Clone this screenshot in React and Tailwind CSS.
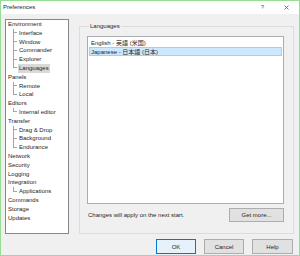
import React from 'react';

const TREE = [
  { label: 'Environment', children: ['Interface', 'Window', 'Commander', 'Explorer', 'Languages'] },
  { label: 'Panels', children: ['Remote', 'Local'] },
  { label: 'Editors', children: ['Internal editor'] },
  { label: 'Transfer', children: ['Drag & Drop', 'Background', 'Endurance'] },
  { label: 'Network' },
  { label: 'Security' },
  { label: 'Logging' },
  { label: 'Integration', children: ['Applications'] },
  { label: 'Commands' },
  { label: 'Storage' },
  { label: 'Updates' },
];

const LANGS = ['English - 英語 (米国)', 'Japanese - 日本語 (日本)'];

// tree child row with the elbow connector
const ChildRow = ({ label, last, selected }) => (
  <div className="flex h-[8.8px] items-stretch">
    <div className="ml-[5px] w-[4px] flex flex-col">
      <div className="h-1/2 border-l border-b border-[#a5a5a5]" />
      <div className={`h-1/2 ${last ? '' : 'border-l border-[#a5a5a5]'}`} />
    </div>
    <span className={`ml-[1px] px-[1px] leading-[8.8px] ${selected ? 'bg-[#d9d9d9]' : ''}`}>{label}</span>
  </div>
);

const Button = ({ children, primary, className = '' }) => (
  <button
    className={`h-[14px] border text-[6px] leading-none ${primary ? 'border-[#0078d7] bg-[#e5f1fb]' : 'border-[#adadad] bg-[#e1e1e1]'} ${className}`}
  >
    {children}
  </button>
);

export default function App() {
  return (
    <div className="w-[300px] h-[256px] border border-[#96dd96] bg-[#f0f0f0] flex flex-col text-[6px] text-[#262626] font-['Liberation_Sans','Noto_Sans_CJK_JP',sans-serif]">
      {/* Title bar */}
      <div className="h-[13px] bg-white flex items-center pl-[2px] pr-[10px]">
        <span className="flex-1">Preferences</span>
        <span className="text-[6px] text-[#555] mr-[20px]">?</span>
        <svg width="5" height="5" viewBox="0 0 5 5" className="text-[#555]">
          <path d="M0.5 0.5 L4.5 4.5 M4.5 0.5 L0.5 4.5" stroke="currentColor" strokeWidth="0.8" />
        </svg>
      </div>

      <div className="flex-1 flex flex-col pl-[4px] pr-[5px] pt-[5px]">
        <div className="flex h-[215px] gap-[10px]">
          {/* Tree */}
          <div className="w-[64px] border border-[#828790] bg-white pl-[2px]">
            {TREE.map((node) => (
              <div key={node.label}>
                <div className="h-[8.8px] leading-[8.8px]">{node.label}</div>
                {node.children &&
                  node.children.map((c, i) => (
                    <ChildRow
                      key={c}
                      label={c}
                      last={i === node.children.length - 1}
                      selected={c === 'Languages'}
                    />
                  ))}
              </div>
            ))}
          </div>

          {/* Languages group */}
          <fieldset className="flex-1 mt-[3px] border border-[#dcdcdc] flex flex-col pl-[7px] pr-[9px] pb-[11px]">
            <legend className="ml-[2px] px-[1px] leading-[8px]">Languages</legend>
            <div className="flex-1 mt-[6px] border border-[#abadb3] bg-white p-[1px]">
              <div className="h-[9px] leading-[8px] px-[1px] border border-transparent">{LANGS[0]}</div>
              <div className="h-[9px] leading-[8px] px-[1px] border border-[#99d1ff] bg-[#cce8ff]">{LANGS[1]}</div>
            </div>
            <div className="mt-[4px] flex items-center justify-between">
              <span className="pl-[1px]">Changes will apply on the next start.</span>
              <Button className="w-[55px]">Get more...</Button>
            </div>
          </fieldset>
        </div>

        {/* Dialog buttons */}
        <div className="mt-[5px] flex justify-end gap-[8px] pr-[1px]">
          <Button primary className="w-[40px] h-[15px]">OK</Button>
          <Button className="w-[40px] h-[15px]">Cancel</Button>
          <Button className="w-[41px] h-[15px]">Help</Button>
        </div>
      </div>
    </div>
  );
}
